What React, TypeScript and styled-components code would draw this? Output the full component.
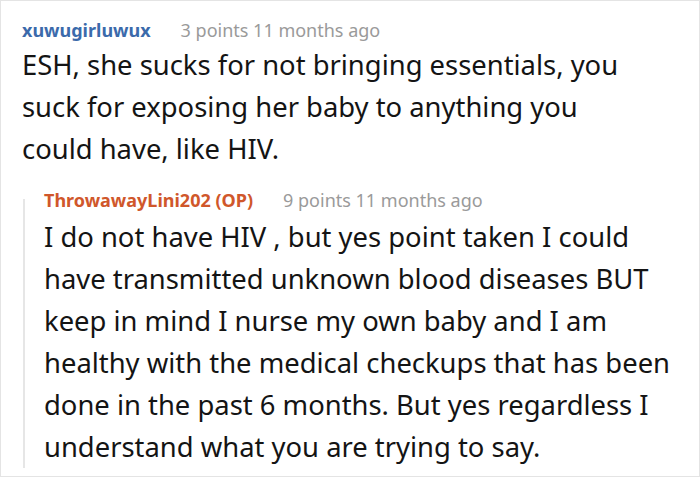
import * as React from 'react';
import styled, { createGlobalStyle } from 'styled-components';

const Global = createGlobalStyle`
  html, body {
    margin: 0;
    padding: 0;
    background: #fff;
  }
  body {
    font-family: 'Noto Sans', 'Open Sans', sans-serif;
  }
`;

const Frame = styled.div`
  box-sizing: border-box;
  width: 700px;
  height: 477px;
  border: 1px solid #e4e4e4;
  overflow: hidden;
  padding: 15px 10px 0 21px;
`;

const Header = styled.div`
  display: flex;
  align-items: baseline;
  gap: 30px;
  line-height: 28px;
  white-space: nowrap;
`;

const Author = styled.span<{ $op?: boolean }>`
  font-size: 18px;
  font-weight: 700;
  color: ${p => (p.$op ? '#d0572b' : '#3b6aab')};
`;

const Meta = styled.span`
  font-size: 18px;
  color: #9a9a9a;
`;

const Body = styled.p<{ $gap?: number }>`
  margin: ${p => p.$gap || 0}px 0 0;
  font-size: 27.4px;
  line-height: 42px;
  color: #141414;
  white-space: nowrap;
`;

// thread line starts a little below the reply's author row
const Reply = styled.div`
  position: relative;
  margin-top: 16px;
  padding-left: 22px;

  &::before {
    content: '';
    position: absolute;
    left: 1px;
    top: 13px;
    bottom: 0;
    width: 2px;
    background: #e6e6e6;
  }
`;

type CommentData = {
  author: string;
  points: number;
  age: string;
  lines: string[];
  op?: boolean;
};

const main: CommentData = {
  author: 'xuwugirluwux',
  points: 3,
  age: '11 months ago',
  lines: [
    'ESH, she sucks for not bringing essentials, you',
    'suck for exposing her baby to anything you',
    'could have, like HIV.',
  ],
};

const reply: CommentData = {
  author: 'ThrowawayLini202 (OP)',
  points: 9,
  age: '11 months ago',
  op: true,
  lines: [
    'I do not have HIV , but yes point taken I could',
    'have transmitted unknown blood diseases BUT',
    'keep in mind I nurse my own baby and I am',
    'healthy with the medical checkups that has been',
    'done in the past 6 months. But yes regardless I',
    'understand what you are trying to say.',
  ],
};

const CommentHead = ({ c }: { c: CommentData }) => (
  <Header>
    <Author $op={c.op}>{c.author}</Author>
    <Meta>{c.points} points {c.age}</Meta>
  </Header>
);

const CommentText = ({ c, gap }: { c: CommentData; gap?: number }) => (
  <Body $gap={gap}>
    {c.lines.map((l, i) => (
      <React.Fragment key={i}>
        {i > 0 && <br />}
        {l}
      </React.Fragment>
    ))}
  </Body>
);

export default function App() {
  return (
    <>
      <Global />
      <Frame>
        <CommentHead c={main} />
        <CommentText c={main} />
        <Reply>
          <CommentHead c={reply} />
          <CommentText c={reply} gap={2} />
        </Reply>
      </Frame>
    </>
  );
}
